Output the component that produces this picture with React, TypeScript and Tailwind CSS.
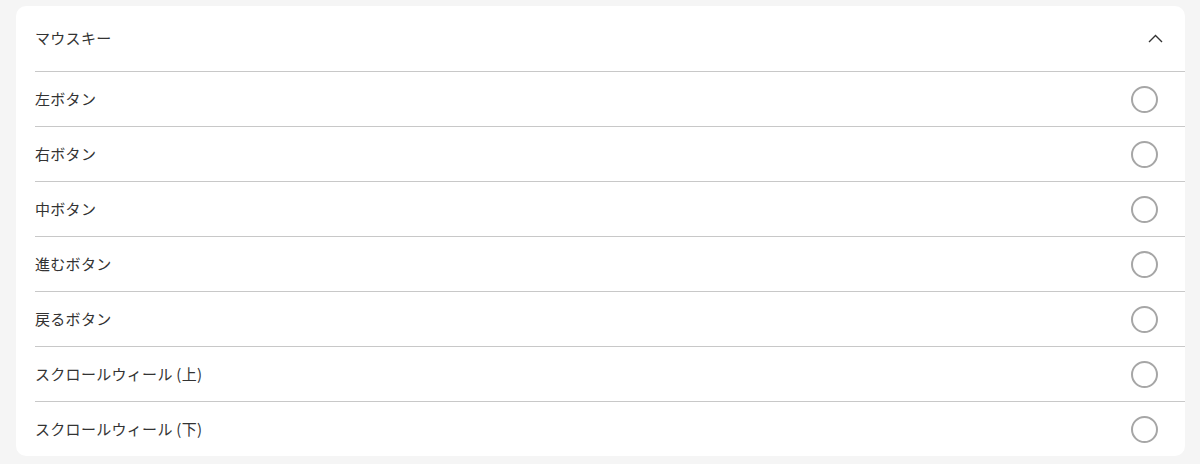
import React, { useState } from "react";

const items = [
  "左ボタン",
  "右ボタン",
  "中ボタン",
  "進むボタン",
  "戻るボタン",
  "スクロールウィール (上)",
  "スクロールウィール (下)",
];

const App = () => {
  const [selected, setSelected] = useState<number | null>(null);

  return (
    <div
      className="w-full h-[464px] bg-[#f5f5f5] pt-[6px] pl-4 pr-[15px]"
      style={{ fontFamily: '"Noto Sans CJK JP", "Noto Sans", sans-serif' }}
    >
      <div className="bg-white rounded-[10px] pl-[19px] h-[450px]">
        <div className="flex items-center justify-between h-[66px] border-b border-[#c8c8c8] pr-[22px]">
          <p className="text-[15px] text-[#333] tracking-[0.3px]">マウスキー</p>
          <svg width="15" height="9" viewBox="0 0 15 9" fill="none">
            <path d="M1 8L7.5 1.5L14 8" stroke="#333" strokeWidth="1.4" />
          </svg>
        </div>
        {items.map((item, i) => (
          <div
            key={item}
            onClick={() => setSelected(i)}
            className={
              "flex items-center justify-between h-[55px] pr-[27px] cursor-pointer " +
              (i < items.length - 1 ? "border-b border-[#c8c8c8]" : "")
            }
          >
            <p className="text-[15px] text-[#333] tracking-[0.3px]">{item}</p>
            <div className="w-[27px] h-[27px] rounded-full border-2 border-[#a6a6a6] flex items-center justify-center">
              {selected === i && (
                <div className="w-[13px] h-[13px] rounded-full bg-[#a6a6a6]"></div>
              )}
            </div>
          </div>
        ))}
      </div>
    </div>
  );
};

export default App;
